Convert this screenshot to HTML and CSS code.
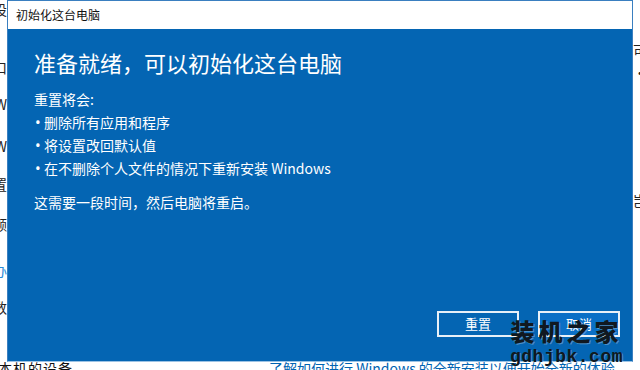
FILE: index.html
```html
<!DOCTYPE html>
<html>
<head>
  <title>初始化这台电脑</title>
  <meta name="viewport" content="width=device-width, initial-scale=1.0">
  <link rel="stylesheet" href="styles.css">
</head>
<body>
  <div class="page">
    <div class="page-left">
      <div class="frag" style="margin-top: 1px">设</div>
      <div class="frag" style="margin-top: 42px">口</div>
      <div class="frag" style="margin-top: 21px">W</div>
      <div class="frag" style="margin-top: 26px">W</div>
      <div class="frag" style="margin-top: 22px">置</div>
      <div class="frag" style="margin-top: 24px">额</div>
      <div class="frag blue" style="margin-top: 30px">办</div>
      <div class="frag" style="margin-top: 21px">数</div>
    </div>
    <div class="page-right">
      <div class="frag" style="margin-top: 42px">可</div>
      <div class="frag" style="margin-top: 6px">·</div>
      <div class="frag" style="margin-top: 112px">岂</div>
    </div>
    <div class="page-bottom">
      <span class="device">本机的设备</span>
      <span class="link">了解如何进行 Windows 的全新安装以便开始全新的体验</span>
    </div>
  </div>

  <div class="dialog">
    <div class="titlebar">初始化这台电脑</div>
    <div class="dialog-body">
      <h1>准备就绪，可以初始化这台电脑</h1>
      <p class="lead">重置将会:</p>
      <ul class="items">
        <li>删除所有应用和程序</li>
        <li>将设置改回默认值</li>
        <li>在不删除个人文件的情况下重新安装 Windows</li>
      </ul>
      <p class="note">这需要一段时间，然后电脑将重启。</p>
      <div class="buttons">
        <button class="btn">重置</button>
        <button class="btn primary">取消</button>
      </div>
    </div>
  </div>

  <div class="watermark">
    <span class="wm-name">装机之家</span>
    <span class="wm-url">gdhjbk.com</span>
  </div>
</body>
</html>
```

FILE: styles.css
```css
body {
  margin: 0;
  width: 640px;
  height: 370px;
  overflow: hidden;
  background: #fff;
  font-family: "Noto Sans CJK SC", "Noto Sans", sans-serif;
  color: #222;
  position: relative;
}

/* Page behind the dialog */
.page {
  width: 640px;
  height: 370px;
  display: flex;
  flex-wrap: wrap;
  justify-content: space-between;
  align-content: space-between;
  font-size: 14px;
  line-height: 16px;
}
.page-left,
.page-right {
  display: flex;
  flex-direction: column;
}
.page-left {
  width: 7px;
  overflow: hidden;
}
.page-left .frag {
  display: flex;
  justify-content: flex-end;
}
.page-right {
  width: 7px;
  overflow: hidden;
}
.frag {
  white-space: nowrap;
}
.frag.blue {
  color: #2a8ad8;
}
.page-bottom {
  width: 640px;
  height: 10px;
  display: flex;
  gap: 196px;
  overflow: hidden;
  font-size: 14px;
  line-height: 16px;
}
.device {
  margin-left: -2px;
  color: #111;
  letter-spacing: 1px;
}
.link {
  color: #0063b1;
  white-space: nowrap;
}

/* Dialog */
.dialog {
  position: absolute;
  left: 7px;
  top: 0;
  width: 626px;
  height: 362px;
  display: flex;
  flex-direction: column;
  box-sizing: border-box;
  border: 1px solid #3a7fc0;
  border-bottom-color: #9cc3e4;
}
.titlebar {
  height: 28px;
  flex: none;
  background: #fff;
  font-size: 12px;
  line-height: 28px;
  padding-left: 8px;
  color: #111;
}
.dialog-body {
  flex: 1;
  background: #0465b3;
  color: #fff;
  display: flex;
  flex-direction: column;
  padding: 18px 12px 24px 26px;
}
.dialog-body h1 {
  margin: 0;
  font-size: 22px;
  font-weight: normal;
  line-height: 30px;
}
.lead {
  margin: 11px 0 0;
  font-size: 14px;
  line-height: 23px;
}
.items {
  list-style: none;
  margin: 0;
  padding: 0;
  font-size: 14px;
  line-height: 23px;
}
.items li::before {
  content: "•";
  display: inline-block;
  width: 9px;
  margin-left: 1px;
  font-family: "Noto Sans", sans-serif;
  font-size: 15px;
}
.note {
  margin: 11px 0 0;
  font-size: 14px;
  line-height: 23px;
}
.buttons {
  margin-top: auto;
  display: flex;
  justify-content: flex-end;
  gap: 19px;
}
.btn {
  width: 82px;
  height: 26px;
  background: #0465b3;
  border: 2px solid #e8f0f8;
  color: #fff;
  font-family: "Noto Sans CJK SC", sans-serif;
  font-size: 13px;
  line-height: 20px;
  padding: 0;
}
.btn.primary {
  background: #0a6fc6;
}

/* Watermark stamped over the picture */
.watermark {
  position: absolute;
  left: 510px;
  top: 316px;
  display: flex;
  flex-direction: column;
  align-items: center;
  color: #101820;
  text-shadow: 1px 1px 0 rgba(255, 255, 255, 0.3);
}
.wm-name {
  font-family: "Noto Sans CJK SC", sans-serif;
  font-weight: 900;
  font-size: 24px;
  line-height: 30px;
  letter-spacing: 4px;
}
.wm-url {
  font-family: "Liberation Mono", monospace;
  font-weight: bold;
  font-size: 18px;
  line-height: 18px;
  letter-spacing: 0.5px;
  margin-top: 2px;
}
```
